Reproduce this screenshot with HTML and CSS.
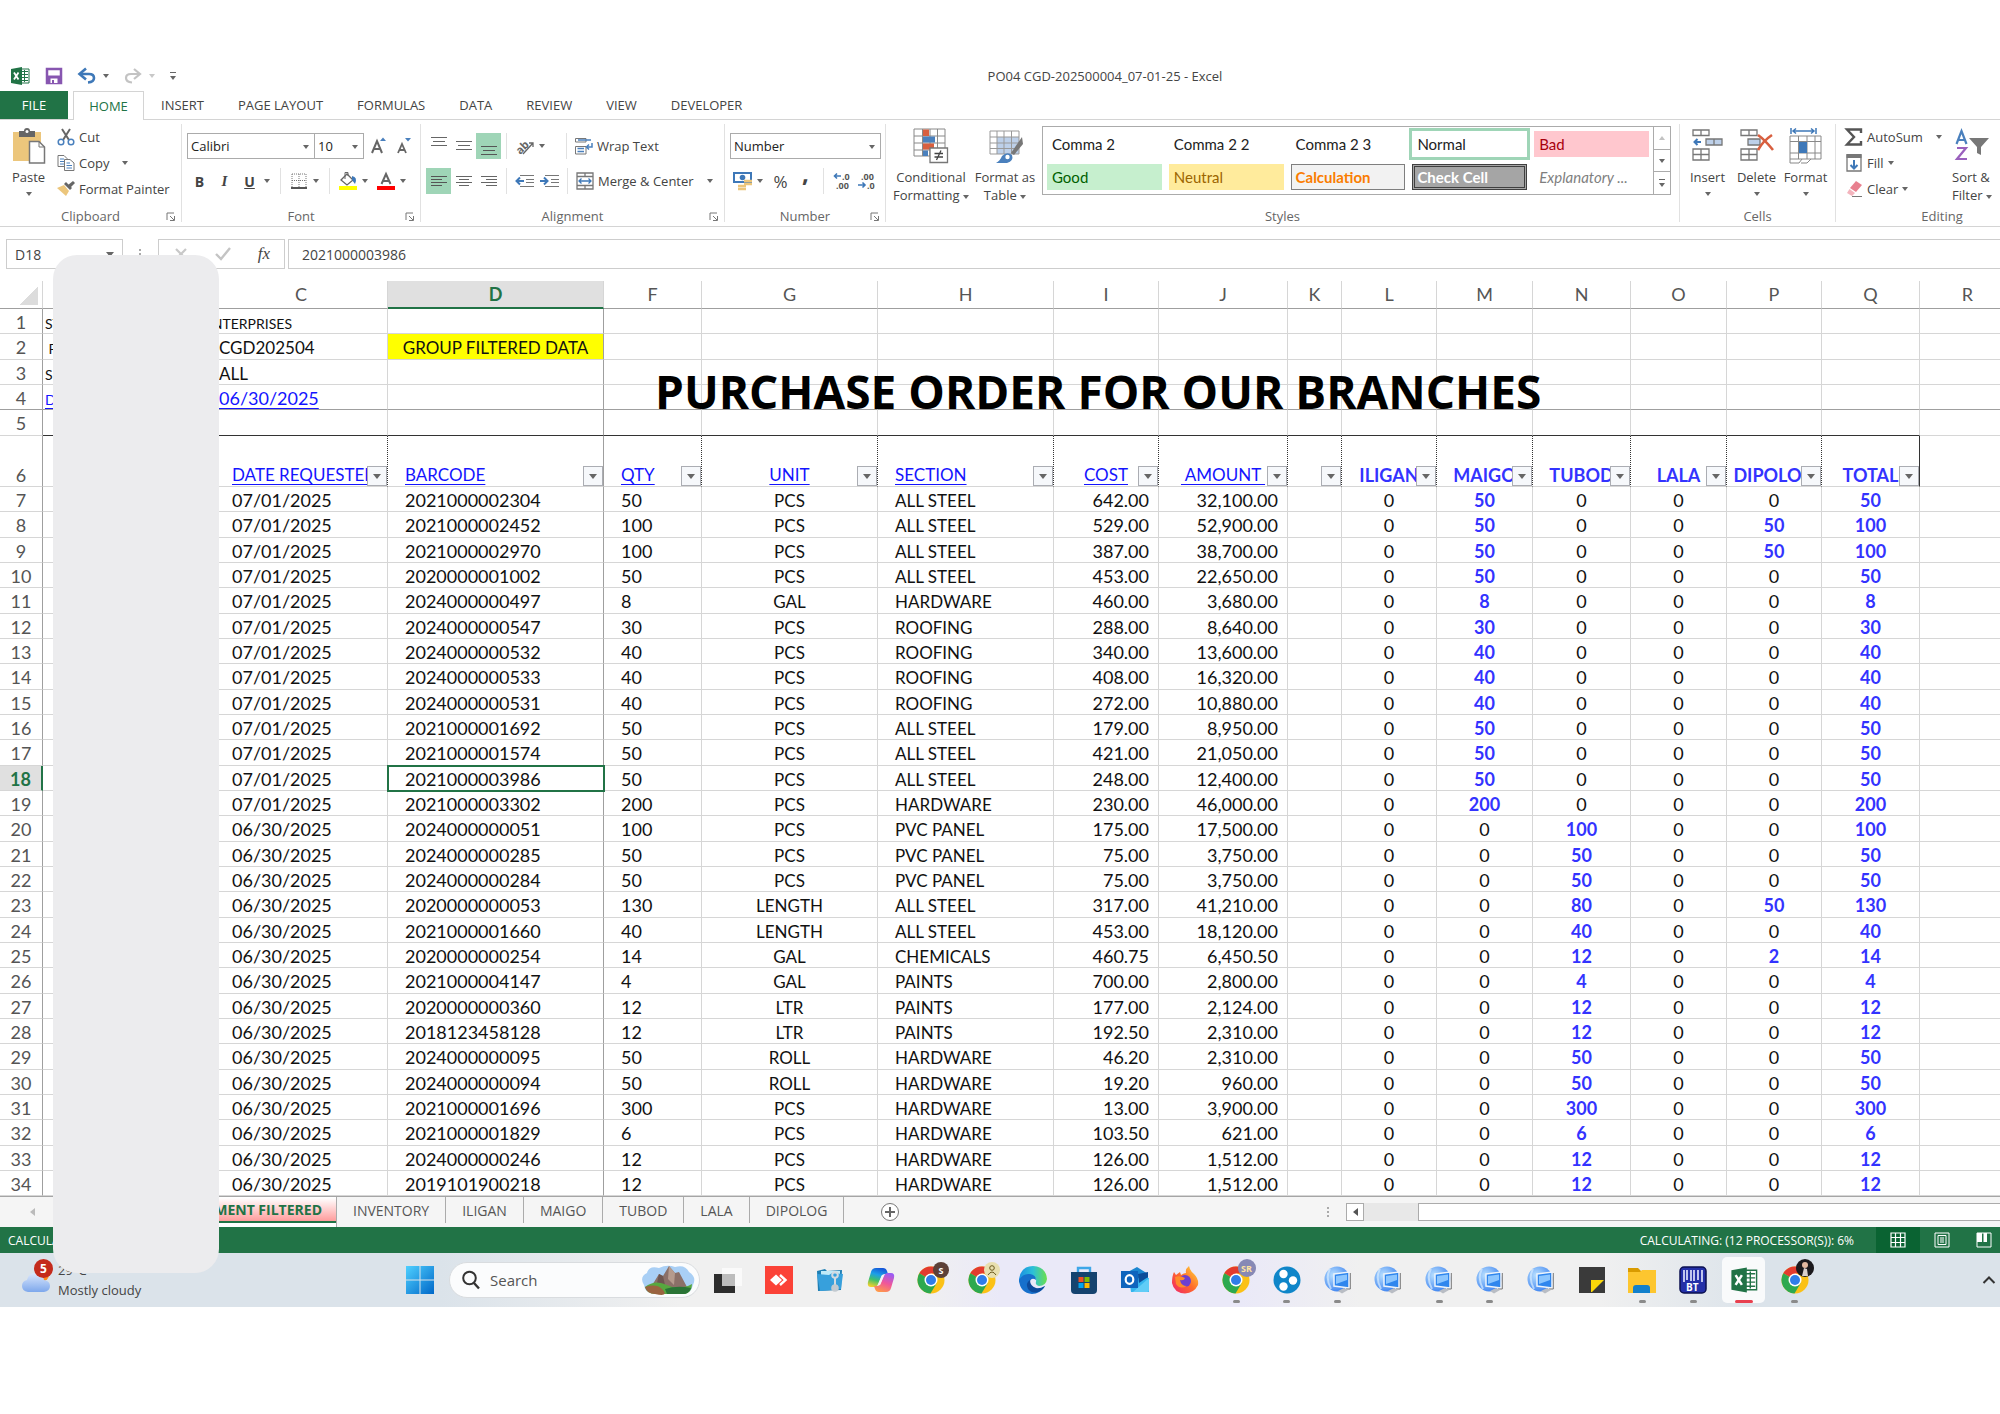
FILE: index.html
```html
<!DOCTYPE html>
<html lang="en">
<head>
  <meta charset="UTF-8" />
  <meta name="viewport" content="width=device-width, initial-scale=1.0"/>
  <title>PO04 CGD-202500004_07-01-25 - Excel</title>
  <link rel="stylesheet" href="styles.css">
</head>
<body>
  <!-- shared icons -->
  <svg class="defs" aria-hidden="true">
    <linearGradient id="gBlue" x1="0" y1="0" x2="1" y2="1"><stop offset="0" stop-color="#4fd0ff"/><stop offset="1" stop-color="#0067c8"/></linearGradient>
    <linearGradient id="gCloud" x1="0" y1="0" x2="0" y2="1"><stop offset="0" stop-color="#dbe8fd"/><stop offset="1" stop-color="#7ea8ec"/></linearGradient>
    <linearGradient id="gEdge" x1="0" y1="0" x2="1" y2="0"><stop offset="0" stop-color="#1b8fe2"/><stop offset=".5" stop-color="#2cc0d8"/><stop offset="1" stop-color="#6be04c"/></linearGradient>
    <linearGradient id="gFire" x1="0" y1="1" x2="1" y2="0"><stop offset="0" stop-color="#f0206e"/><stop offset=".5" stop-color="#ff6a2a"/><stop offset="1" stop-color="#ffe03b"/></linearGradient>
    <linearGradient id="gCopA" x1=".6" y1="0" x2=".3" y2="1"><stop offset="0" stop-color="#1557d8"/><stop offset=".35" stop-color="#1c9fe8"/><stop offset=".65" stop-color="#3fc06a"/><stop offset="1" stop-color="#f0d02c"/></linearGradient>
    <linearGradient id="gCopB" x1=".7" y1="0" x2=".3" y2="1"><stop offset="0" stop-color="#9a5cf4"/><stop offset=".5" stop-color="#f0569a"/><stop offset="1" stop-color="#ff9a4a"/></linearGradient>
    <radialGradient id="gOrb" cx=".35" cy=".35" r=".7"><stop offset="0" stop-color="#b9e0ff"/><stop offset="1" stop-color="#3d83f0"/></radialGradient>
    <symbol id="launcher" viewBox="0 0 10 10"><path d="M1 8V1H8M4 4L8 8M8.500 4V8.500H4" fill="none" stroke="#777"/></symbol>
    <symbol id="excel" viewBox="0 0 20 20">
      <path d="M10 3H19V17H10Z" fill="#fff" stroke="#217346"/>
      <path d="M11 5.500H18M11 8.500H18M11 11.500H18M11 14.500H18M14.500 4V16" stroke="#217346"/>
      <path d="M1 3L12 1V19L1 17Z" fill="#217346"/>
      <path d="M4 6.500L8.500 13.500M8.500 6.500L4 13.500" stroke="#fff" stroke-width="1.800"/>
    </symbol>
    <symbol id="chrome" viewBox="0 0 28 28">
      <circle cx="14" cy="14" r="13.500" fill="#fbc116"/>
      <path d="M14 14L2.300 7.200A13.500 13.500 0 0 1 25.700 7.200L14 7.500Z" fill="#e33b2e"/>
      <path d="M2.300 7.200A13.500 13.500 0 0 0 13.500 27.500L19.500 17.500L14 14Z" fill="#2da94f"/>
      <circle cx="14" cy="14" r="6.500" fill="#fff"/><circle cx="14" cy="14" r="5" fill="#2f7de9"/>
    </symbol>
    <symbol id="remote" viewBox="0 0 28 28">
      <circle cx="13" cy="13" r="12.500" fill="url(#gOrb)"/>
      <path d="M6 3Q1 12 7 23" stroke="#d5ebff" stroke-width="2" fill="none" opacity=".7"/>
      <path d="M10 8L25 6V22L10 20Z" fill="#2f86ee" stroke="#eef4fb" stroke-width="1.500"/>
      <path d="M12 10L23 8.500V14L12 18Z" fill="#8cc6ff"/>
      <path d="M26.300 7V23L22 23" stroke="#777" fill="none"/><path d="M14 25L20 22L24 24L18 27.500Z" fill="#b9bdc4"/>
    </symbol>
  </svg>

  <div class="app">
    <header class="titlebar">
      <div class="quick">
        <svg width="20" height="20"><use href="#excel"/></svg>
        <button aria-label="Save"><svg width="18" height="18" viewBox="0 0 18 18"><path d="M2 2H16V16H2Z" fill="#fff" stroke="#8756b0" stroke-width="2.500"/><path d="M2 8.500H16V16H2Z" fill="#8756b0"/><path d="M5.500 11.500H12.500V16H5.500Z" fill="#fff"/><path d="M7 13H9V16H7Z" fill="#8756b0"/></svg></button>
        <button class="split" aria-label="Undo"><svg width="18" height="16" viewBox="0 0 18 16"><path d="M2 6H11Q16 6 16 10T10 14.500" fill="none" stroke="#3e78b8" stroke-width="2.600"/><path d="M8 .5L1.500 6L8 11.500" fill="none" stroke="#3e78b8" stroke-width="2.600"/></svg><i class="caret"></i></button>
        <button class="split dim" aria-label="Redo"><svg width="18" height="16" viewBox="0 0 18 16"><path d="M16 6H7Q2 6 2 10T8 14.500" fill="none" stroke="#b5b5b5" stroke-width="2.200"/><path d="M10 1L16 6L10 11" fill="none" stroke="#b5b5b5" stroke-width="2.200"/></svg><i class="caret"></i></button>
        <button class="more" aria-label="Customize"><i class="caret"></i></button>
      </div>
      <div class="doc-title">PO04 CGD-202500004_07-01-25 - Excel</div>
    </header>

    <nav class="tabs">
      <button class="tab file">FILE</button>
      <button class="tab active">HOME</button>
      <button class="tab">INSERT</button>
      <button class="tab">PAGE LAYOUT</button>
      <button class="tab">FORMULAS</button>
      <button class="tab">DATA</button>
      <button class="tab">REVIEW</button>
      <button class="tab">VIEW</button>
      <button class="tab">DEVELOPER</button>
    </nav>

    <div class="ribbon">
      <section class="group clipboard">
        <div class="group-body">
          <button class="big">
            <svg width="34" height="36" viewBox="0 0 34 36"><path d="M1 4H29V33H1Z" fill="#ecc67c"/><path d="M7 3H12Q12 0 15 0T18 3H23V9H7Z" fill="#666"/><circle cx="15" cy="3.500" r="1.500" fill="#fff"/><path d="M17.500 13.500H27L32.500 19V35H17.500Z" fill="#fff" stroke="#777" stroke-width="1.500"/><path d="M27 13.500V19H32.500" fill="none" stroke="#777"/></svg>
            <span>Paste</span><i class="caret"></i>
          </button>
          <div class="stack">
            <button class="cmd"><svg width="18" height="18" viewBox="0 0 18 18"><path d="M5 1L12 12M13 1L6 12" stroke="#666" stroke-width="2"/><circle cx="4" cy="14" r="2.800" fill="none" stroke="#4a80bd" stroke-width="1.500"/><circle cx="14" cy="14" r="2.800" fill="none" stroke="#4a80bd" stroke-width="1.500"/></svg>Cut</button>
            <button class="cmd"><svg width="18" height="18" viewBox="0 0 18 18"><path d="M1 1.500H7L10 4.500V12.500H1Z" fill="#fff" stroke="#777"/><path d="M3 5H7M3 7.500H8M3 10H8" stroke="#4a80bd"/><path d="M7.500 5.500H13L17 9V16.500H7.500Z" fill="#fff" stroke="#777"/><path d="M9.500 9H13M9.500 11.500H15M9.500 14H15" stroke="#4a80bd"/></svg>Copy<i class="caret wide"></i></button>
            <button class="cmd"><svg width="18" height="18" viewBox="0 0 18 18"><path d="M0 8L7 5L12 11L9 16Z" fill="#ecc67c"/><path d="M7 4L13 10L15 8L9 2Z" fill="#666"/><path d="M11 5L16 1L18 3L13 8Z" fill="#666"/></svg>Format Painter</button>
          </div>
        </div>
        <h2>Clipboard</h2><button class="launch" aria-label="Clipboard settings"><svg width="10" height="10"><use href="#launcher"/></svg></button>
      </section>

      <section class="group font">
        <div class="group-body rows">
          <div class="row">
            <span class="combo typeface"><select aria-label="Font"><option>Calibri</option></select></span><span class="combo size"><select aria-label="Font size"><option>10</option></select></span>
            <button class="ico" aria-label="Grow font"><svg width="20" height="20" viewBox="0 0 20 20"><path d="M3 17L8 5L13 17M5 13H11" fill="none" stroke="#666" stroke-width="2"/><path d="M11 5H17L14 1.500Z" fill="#4a80bd"/></svg></button>
            <button class="ico" aria-label="Shrink font"><svg width="20" height="20" viewBox="0 0 20 20"><path d="M4 17L8 8L12 17M5.500 14H10.500" fill="none" stroke="#666" stroke-width="1.800"/><path d="M11 2H17L14 5.500Z" fill="#4a80bd"/></svg></button>
          </div>
          <div class="row">
            <button class="ico bold">B</button><button class="ico italic">I</button><button class="ico under">U</button><i class="caret"></i>
            <i class="sep"></i>
            <button class="ico" aria-label="Borders"><svg width="16" height="16" viewBox="0 0 16 16"><path d="M1 1H15M1 1V14M15 1V14M8 1V14M1 7.500H15" stroke="#777" stroke-dasharray="1 1"/><path d="M0 15H16" stroke="#555" stroke-width="2"/></svg></button><i class="caret"></i>
            <i class="sep"></i>
            <button class="ico" aria-label="Fill colour"><svg width="20" height="20" viewBox="0 0 20 20"><path d="M3 9L9 3L15 9L9 14Z" fill="#fff" stroke="#666" stroke-width="1.300"/><path d="M7 8V1.500H10V5" fill="none" stroke="#666"/><path d="M14 5Q20 6 17 13L14 9Z" fill="#3e78b8"/><path d="M1 15H19V19H1Z" fill="#ff0"/></svg></button><i class="caret"></i>
            <button class="ico" aria-label="Font colour"><svg width="20" height="20" viewBox="0 0 20 20"><path d="M5.500 13L10 3L14.500 13M7 10H13" fill="none" stroke="#666" stroke-width="2"/><path d="M1 15H19V19H1Z" fill="#f00"/></svg></button><i class="caret"></i>
          </div>
        </div>
        <h2>Font</h2><button class="launch" aria-label="Font settings"><svg width="10" height="10"><use href="#launcher"/></svg></button>
      </section>

      <section class="group align">
        <div class="group-body rows">
          <div class="row">
            <button class="ico" aria-label="Top align"><svg width="18" height="20" viewBox="0 0 18 20"><path d="M1 1.500H17M3 5.500H15M1 9.500H17" stroke="#666"/></svg></button>
            <button class="ico" aria-label="Middle align"><svg width="18" height="20" viewBox="0 0 18 20"><path d="M1 5.500H17M3 9.500H15M1 13.500H17" stroke="#666"/></svg></button>
            <button class="ico on" aria-label="Bottom align"><svg width="18" height="20" viewBox="0 0 18 20"><path d="M1 10.500H17M3 14.500H15M1 18.500H17" stroke="#555"/></svg></button>
            <i class="sep"></i>
            <button class="ico" aria-label="Orientation"><svg width="20" height="20" viewBox="0 0 20 20"><text x="1" y="15" class="ab" transform="rotate(-45 8 12)">ab</text><path d="M8 18L18 7M14 7H18V11" fill="none" stroke="#666" stroke-width="1.300"/></svg></button><i class="caret"></i>
            <i class="sep end"></i>
            <button class="cmd"><svg width="18" height="18" viewBox="0 0 18 18"><path d="M.5 1.500H11V5H.5ZM.5 9.500H11V17H.5Z" fill="#fff" stroke="#777"/><path d="M3 3H16M2.500 11.500H9M2.500 14.500H9" stroke="#4a80bd" stroke-width="1.300"/><path d="M17 6V10H12M14 7.500L11.500 10L14 12.500" fill="none" stroke="#4a80bd" stroke-width="1.500"/></svg>Wrap Text</button>
          </div>
          <div class="row">
            <button class="ico on" aria-label="Align left"><svg width="18" height="20" viewBox="0 0 18 20"><path d="M1 5.500H17M1 8.500H12M1 11.500H17M1 14.500H12" stroke="#555"/></svg></button>
            <button class="ico" aria-label="Center"><svg width="18" height="20" viewBox="0 0 18 20"><path d="M1 5.500H17M4 8.500H14M1 11.500H17M4 14.500H14" stroke="#666"/></svg></button>
            <button class="ico" aria-label="Align right"><svg width="18" height="20" viewBox="0 0 18 20"><path d="M1 5.500H17M6 8.500H17M1 11.500H17M6 14.500H17" stroke="#666"/></svg></button>
            <i class="sep"></i>
            <button class="ico" aria-label="Decrease indent"><svg width="20" height="20" viewBox="0 0 20 20"><path d="M5 4.500H19M11 8.500H19M11 11.500H19M5 15.500H19" stroke="#777"/><path d="M9 10H2M5 6.500L1.500 10L5 13.500" fill="none" stroke="#3e78b8" stroke-width="2"/></svg></button>
            <button class="ico" aria-label="Increase indent"><svg width="20" height="20" viewBox="0 0 20 20"><path d="M5 4.500H19M11 8.500H19M11 11.500H19M5 15.500H19" stroke="#777"/><path d="M0 10H7M4 6.500L7.500 10L4 13.500" fill="none" stroke="#3e78b8" stroke-width="2"/></svg></button>
            <i class="sep end near"></i>
            <button class="cmd"><svg width="18" height="18" viewBox="0 0 18 18"><path d="M1 1H17V17H1ZM1 4.500H17M1 13.500H17M9 1V4.500M9 13.500V17" fill="none" stroke="#777" stroke-width="1.300"/><path d="M3 9H15M5.500 6.500L3 9L5.500 11.500M12.500 6.500L15 9L12.500 11.500" fill="none" stroke="#3e78b8" stroke-width="1.300"/></svg>Merge &amp; Center<i class="caret wide"></i></button>
          </div>
        </div>
        <h2>Alignment</h2><button class="launch" aria-label="Alignment settings"><svg width="10" height="10"><use href="#launcher"/></svg></button>
      </section>

      <section class="group number">
        <div class="group-body rows">
          <div class="row"><span class="combo format"><select aria-label="Number format"><option>Number</option></select></span></div>
          <div class="row">
            <button class="ico" aria-label="Accounting format"><svg width="20" height="20" viewBox="0 0 20 20"><path d="M1 2H18V11H1Z" fill="#fff" stroke="#3e78b8" stroke-width="2"/><circle cx="9.500" cy="6.500" r="2.800" fill="#3e78b8"/><path d="M11 10H19M11 13H19M5 15H13M5 18H13" stroke="#ecc67c" stroke-width="2.400"/></svg></button><i class="caret"></i>
            <button class="ico pct">%</button><button class="ico comma">,</button>
            <i class="sep"></i>
            <button class="ico" aria-label="Increase decimal"><svg width="20" height="20" viewBox="0 0 20 20"><text x="10" y="9" class="dec">.0</text><text x="4" y="18" class="dec">.00</text><path d="M9 5H3M5 2.500L2.500 5L5 7.500" fill="none" stroke="#3e78b8" stroke-width="1.600"/></svg></button>
            <button class="ico" aria-label="Decrease decimal"><svg width="20" height="20" viewBox="0 0 20 20"><text x="4" y="9" class="dec">.00</text><text x="10" y="18" class="dec">.0</text><path d="M1 14H8M5.500 11.500L8 14L5.500 16.500" fill="none" stroke="#3e78b8" stroke-width="1.600"/></svg></button>
          </div>
        </div>
        <h2>Number</h2><button class="launch" aria-label="Number settings"><svg width="10" height="10"><use href="#launcher"/></svg></button>
      </section>

      <section class="group styles">
        <div class="group-body">
          <button class="big cond">
            <svg width="36" height="36" viewBox="0 0 36 36"><path d="M1 1H32V28H1ZM1 8H32M1 15H32M1 22H32M9.500 1V28M17 1V28M24.500 1V28" fill="#fff" stroke="#888"/><path d="M10 1.500H16V8H10ZM10 15.500H21V21.500H10Z" fill="#d85f3f"/><path d="M10 8.500H22V14.500H10ZM10 22.500H15V28H10Z" fill="#4a80bd"/><path d="M17 20H34.500V34.500H17Z" fill="#fff" stroke="#777" stroke-width="1.300"/><path d="M21.500 25.500H30M21.500 29H30M28 22.500L23.500 32" stroke="#444" stroke-width="1.300"/></svg>
            <span>Conditional<br>Formatting <i class="caret"></i></span>
          </button>
          <button class="big table-btn">
            <svg width="36" height="36" viewBox="0 0 36 36"><path d="M3 3H32V26H3Z" fill="#fff"/><path d="M10 9H32V26H10Z" fill="#bdd0e9"/><path d="M3 3H32V26H3ZM3 9H32M3 15H32M3 20.500H32M10 3V26M17 3V26M24.500 3V26" fill="none" stroke="#999"/><path d="M35 9L24 25L27 27L36 16Z" fill="#777"/><path d="M9 35Q13 33 15 28Q20 23 25 27Q27 33 20 35Z" fill="#4a80bd"/><circle cx="20.500" cy="29" r="2.200" fill="#fff"/></svg>
            <span>Format as<br>Table <i class="caret"></i></span>
          </button>
          <div class="gallery">
            <div class="swatches">
              <button>Comma 2</button><button>Comma 2 2</button><button>Comma 2 3</button><button class="normal">Normal</button><button class="bad">Bad</button>
              <button class="good">Good</button><button class="neutral">Neutral</button><button class="calc">Calculation</button><button class="check">Check Cell</button><button class="expl">Explanatory ...</button>
            </div>
            <div class="scroller"><button class="up" aria-label="Up"><i class="caret"></i></button><button aria-label="Down"><i class="caret"></i></button><button class="more" aria-label="More"><i class="caret"></i></button></div>
          </div>
        </div>
        <h2>Styles</h2>
      </section>

      <section class="group cells">
        <div class="group-body">
          <button class="big"><svg width="34" height="36" viewBox="0 0 34 36"><path d="M2 2H18V7.500H2ZM10 2V7.500M2 21H18V32H2ZM10 21V32M2 26.500H18" fill="#fff" stroke="#777" stroke-width="1.300"/><path d="M15 11H31V17H15ZM23 11V17" fill="#bdd0e9" stroke="#777" stroke-width="1.300"/><path d="M10 14H4M6.500 11L3.500 14L6.500 17" fill="none" stroke="#3e78b8" stroke-width="2"/></svg><span>Insert</span><i class="caret"></i></button>
          <button class="big"><svg width="34" height="36" viewBox="0 0 34 36"><path d="M1 2H17V7.500H1ZM9 2V7.500M1 21H17V32H1ZM9 21V32M1 26.500H17" fill="#fff" stroke="#777" stroke-width="1.300"/><path d="M8 11H20V17H8Z" fill="#bdd0e9" stroke="#777" stroke-width="1.300"/><path d="M18 7Q25 12 33 22M32 7Q23 13 18 22" fill="none" stroke="#d85f3f" stroke-width="2.600"/></svg><span>Delete</span><i class="caret"></i></button>
          <button class="big"><svg width="34" height="36" viewBox="0 0 34 36"><path d="M2 0V6M27 0V6M4 3H25M7 .5L4 3L7 5.500M22 .5L25 3L22 5.500" fill="none" stroke="#3e78b8" stroke-width="1.500"/><path d="M1 8H32V31H1ZM1 13.500H32M1 25H32M9.500 8V31M18 8V31M26 8V31M1 31V35H10L13 31M12 35H18L22 31" fill="none" stroke="#888"/><path d="M10 14H18V25H10Z" fill="#3e78b8"/></svg><span>Format</span><i class="caret"></i></button>
        </div>
        <h2>Cells</h2>
      </section>

      <section class="group editing">
        <div class="group-body">
          <div class="stack">
            <button class="cmd"><svg width="18" height="18" viewBox="0 0 18 18"><path d="M16 5V1.500H2L9 9L2 16.500H16V13" fill="none" stroke="#555" stroke-width="2.400"/></svg>AutoSum<i class="caret wide"></i></button>
            <button class="cmd"><svg width="18" height="18" viewBox="0 0 18 18"><path d="M2 1H16V17H2Z" fill="#fff" stroke="#777" stroke-width="1.300"/><path d="M1.500 0H16.500V4H1.500Z" fill="#777"/><path d="M9 6V14M5.500 11L9 14.500L12.500 11" fill="none" stroke="#3e78b8" stroke-width="2"/></svg>Fill<i class="caret"></i></button>
            <button class="cmd"><svg width="18" height="18" viewBox="0 0 18 18"><path d="M5 8L11 1L17 5L11 12Z" fill="#e8808f"/><path d="M4.500 9L10 13L7 16L2 13Z" fill="#f3b4bd"/><path d="M7 16.500H17" stroke="#777"/></svg>Clear<i class="caret"></i></button>
          </div>
          <button class="big sort"><svg width="34" height="36" viewBox="0 0 34 36"><path d="M1.500 16L6.500 3L11.500 16M3.500 12H9.500" fill="none" stroke="#4a80bd" stroke-width="2.200"/><path d="M2 20H11L2 31H12" fill="none" stroke="#9a60bd" stroke-width="2.200"/><path d="M14 10H34L26 19V27L22 25V19Z" fill="#777"/></svg><span>Sort &amp;<br>Filter <i class="caret"></i></span></button>
        </div>
        <h2>Editing</h2>
      </section>
    </div>

    <div class="formula-bar">
      <div class="name-box"><input type="text" value="D18" aria-label="Name box"><i class="caret"></i></div>
      <span class="dots"></span>
      <div class="fx">
        <button aria-label="Cancel"><svg width="14" height="14" viewBox="0 0 14 14"><path d="M2 2L12 12M12 2L2 12" stroke="#c8c8c8" stroke-width="2.200"/></svg></button>
        <button aria-label="Enter"><svg width="16" height="14" viewBox="0 0 16 14"><path d="M1 7L6 12L15 1" fill="none" stroke="#c4c4c4" stroke-width="2.400"/></svg></button>
        <button class="fn" aria-label="Insert function">fx</button>
      </div>
      <input class="formula" type="text" value="2021000003986" aria-label="Formula">
    </div>

    <main class="sheet">
      <table>
        <colgroup>
          <col class="w-head"><col class="w-a"><col class="w-a"><col class="w-c"><col class="w-d"><col class="w-f"><col class="w-g"><col class="w-g"><col class="w-i"><col class="w-j"><col class="w-k"><col class="w-l"><col class="w-m"><col class="w-f"><col class="w-m"><col class="w-l"><col class="w-f"><col class="w-m">
        </colgroup>
        <thead>
          <tr>
            <th class="corner"></th><th></th><th></th><th>C</th><th class="picked">D</th><th>F</th><th>G</th><th>H</th><th>I</th><th>J</th><th>K</th><th>L</th><th>M</th><th>N</th><th>O</th><th>P</th><th>Q</th><th>R</th>
          </tr>
        </thead>
        <tbody id="top">
          <tr><th>1</th><td class="label">ST</td><td class="company" colspan="2">NTERPRISES</td><td class="d"></td><td></td><td></td><td></td><td></td><td></td><td></td><td></td><td></td><td></td><td></td><td></td><td></td><td></td></tr>
          <tr><th>2</th><td class="label">&nbsp;PO</td><td></td><td class="info caps">CGD202504</td><td class="d group-name caps">GROUP FILTERED DATA</td><td></td><td></td><td></td><td></td><td></td><td></td><td></td><td></td><td></td><td></td><td></td><td></td><td></td></tr>
          <tr><th>3</th><td class="label">SE</td><td></td><td class="info caps">ALL</td><td class="d"></td><td></td><td></td><td></td><td></td><td></td><td></td><td></td><td></td><td></td><td></td><td></td><td></td><td></td></tr>
          <tr class="frozen"><th>4</th><td class="label"><a href="#">DA</a></td><td></td><td class="info"><a href="#">06/30/2025</a></td><td class="d"></td><td></td><td></td><td></td><td></td><td></td><td></td><td></td><td></td><td></td><td></td><td></td><td></td><td></td></tr>
          <tr class="ruled"><th>5</th><td></td><td></td><td></td><td class="d"></td><td></td><td></td><td></td><td></td><td></td><td></td><td></td><td></td><td></td><td></td><td></td><td></td><td class="r"></td></tr>
          <tr class="fields" id="fields"><th>6</th><td></td><td></td></tr>
        </tbody>
        <tbody id="orders"></tbody>
      </table>
      <h1 class="banner">PURCHASE ORDER FOR OUR BRANCHES</h1>
    </main>

    <div class="sheet-tabs">
      <button class="prev" aria-label="Previous sheet"><i></i></button>
      <button class="sheet-tab current"><span>MENT FILTERED</span></button>
      <button class="sheet-tab">INVENTORY</button><button class="sheet-tab">ILIGAN</button><button class="sheet-tab">MAIGO</button><button class="sheet-tab">TUBOD</button><button class="sheet-tab">LALA</button><button class="sheet-tab">DIPOLOG</button>
      <button class="add" aria-label="New sheet"><svg width="20" height="20" viewBox="0 0 20 20"><circle cx="10" cy="10" r="8.500" fill="#fff" stroke="#777"/><path d="M10 5V15M5 10H15" stroke="#666" stroke-width="2"/></svg></button>
      <div class="hscroll"><span class="dots"></span><button aria-label="Scroll left"><i></i></button><span class="track"></span><span class="thumb"></span></div>
    </div>

    <footer class="status">
      <span>CALCULATING</span>
      <span class="progress">CALCULATING: (12 PROCESSOR(S)): 6%</span>
      <button class="on" aria-label="Normal view"><svg width="16" height="16" viewBox="0 0 16 16"><path d="M1 1H15V15H1ZM1 5.500H15M1 10.500H15M5.500 1V15M10.500 1V15" fill="none" stroke="#fff" stroke-width="1.200"/></svg></button>
      <button aria-label="Page layout view"><svg width="16" height="16" viewBox="0 0 16 16"><path d="M1 1H15V15H1ZM4 3.500H12V12.500H4ZM6 6H10M6 8H10M6 10H10" fill="none" stroke="#fff"/></svg></button>
      <button aria-label="Page break view"><svg width="16" height="16" viewBox="0 0 16 16"><path d="M1 1H15V15H1Z" fill="none" stroke="#fff"/><path d="M1 1H6V10H1ZM7.500 1H11V10H7.500Z" fill="#fff"/></svg></button>
    </footer>

    <div class="taskbar">
      <div class="weather">
        <span class="cloud"><svg width="30" height="28" viewBox="0 0 30 28"><circle cx="22" cy="9" r="6" fill="#ff8a1f"/><path d="M7 26Q1 25 1 20Q1 15 6 14Q8 6 15 7Q22 7 23 14Q29 15 29 20Q29 25 23 26Z" fill="url(#gCloud)"/></svg><b>5</b></span>
        <div><p>29°C</p><p class="sky">Mostly cloudy</p></div>
      </div>
      <button class="start" aria-label="Start"><svg width="28" height="28" viewBox="0 0 28 28"><path d="M0 0H13.500V13.500H0ZM14.500 0H28V13.500H14.500ZM0 14.500H13.500V28H0ZM14.500 14.500H28V28H14.500Z" fill="url(#gBlue)"/></svg></button>
      <label class="search">
        <svg width="18" height="20" viewBox="0 0 18 20"><circle cx="7.500" cy="8" r="6.300" fill="none" stroke="#333" stroke-width="2"/><path d="M12 13L17 18.500" stroke="#333" stroke-width="2.400"/></svg>
        <input type="text" placeholder="Search" aria-label="Search">
        <svg width="54" height="30" viewBox="0 0 54 30"><path d="M3 20Q-2 12 6 8Q8 0 18 3Q26-1 34 2Q44-1 48 7Q56 12 52 20Q50 28 44 28H12Q4 28 3 20Z" fill="#a9cff5"/><path d="M10 22L18 9L22 11L28 1L34 8L38 7L46 22Z" fill="#8b7068"/><path d="M28 1L34 8L33 20L27 14Z" fill="#b59a8c"/><path d="M18 9L22 11L24 20L16 18Z" fill="#6e5650"/><path d="M4 22Q14 14 26 20T51 19Q51 27 44 29H14Q6 29 4 22Z" fill="#57a83f"/><path d="M4 22Q16 18 22 25T14 29Q6 29 4 22Z" fill="#9a6340"/><path d="M24 24Q36 20 50 23Q48 29 42 29H26Z" fill="#2a7436"/></svg>
      </label>
      <div class="apps" id="apps">
        <button aria-label="Task view"><svg width="28" height="28" viewBox="0 0 28 28"><path d="M8 2H28V20H8Z" fill="#fafafa"/><path d="M0 8H21V27H0Z" fill="#2d2d2d"/><path d="M8 8H21V20H8Z" fill="#bdbdbd"/></svg></button>
        <button aria-label="AnyDesk"><svg width="28" height="28" viewBox="0 0 28 28"><path d="M0 0H28V28H0Z" fill="#fb4237"/><path d="M5 14L11 8.500L17 14L11 19.500Z" fill="#fff"/><path d="M15 9L20.500 14L15 19" fill="none" stroke="#fff" stroke-width="2.400"/></svg></button>
        <button aria-label="Files"><svg width="28" height="28" viewBox="0 0 28 28"><path d="M1 5L9 3L11 5L26 4L25 24L2 25Z" fill="#1f7fb4"/><path d="M5 5H24V12H5Z" fill="#bfeaf8"/><path d="M1 8L13 9L16 7L27 8L25 23L4 25Z" fill="#37a0dc"/><circle cx="19" cy="9" r="2.800" fill="none" stroke="#d3dae0" stroke-width="2"/><path d="M18 11H20V20H18Z" fill="#d3dae0"/><circle cx="19" cy="22" r="3.800" fill="#c3cad0"/></svg></button>
        <button aria-label="Copilot"><svg width="28" height="28" viewBox="0 0 28 28"><path d="M9 2H16Q19 2 20 5L21 8H18Q15 8 14 11L11 18Q10 21 7 21H4Q0 21 1 16L4 6Q5 2 9 2Z" fill="url(#gCopA)"/><path d="M19 26H12Q9 26 8 23L7 20H10Q13 20 14 17L17 10Q18 7 21 7H24Q28 7 27 12L24 22Q23 26 19 26Z" fill="url(#gCopB)"/><path d="M15 9H17L13 19H11Z" fill="#f4f1f6"/></svg></button>
        <button aria-label="Chrome S"><svg width="28" height="28"><use href="#chrome"/></svg><b class="face brown">S</b></button>
        <button aria-label="Chrome guest"><svg width="28" height="28"><use href="#chrome"/></svg><b class="face cream"><svg width="12" height="12" viewBox="0 0 12 12"><circle cx="6" cy="4" r="2.300" fill="none" stroke="#6b5a1e"/><path d="M2 11Q6 5 10 11" fill="none" stroke="#6b5a1e"/></svg></b></button>
        <button aria-label="Edge"><svg width="28" height="28" viewBox="0 0 28 28"><path d="M0 13Q2 0 14 0Q27 1 28 13Q27 20 20 20Q16 19 17 16Q18 10 11 10Q4 10 0 17Z" fill="url(#gEdge)"/><path d="M0 14Q4 7 11 8Q17 9 17 14Q13 11 11 15Q10 22 17 23Q22 23 26 20Q21 28 13 28Q1 27 0 14Z" fill="#1670cc"/><path d="M11 14Q6 17 9 23Q13 28 19 26Q24 24 26 20Q21 23 17 22Q11 20 11 14Z" fill="#0d4b9c"/></svg></button>
        <button aria-label="Store"><svg width="28" height="28" viewBox="0 0 28 28"><path d="M8 7V2H20V7" fill="none" stroke="#3ea7e8" stroke-width="2.400"/><path d="M1 6H27V24Q27 28 23 28H5Q1 28 1 24Z" fill="#15436f"/><path d="M8.500 11H13.500V16H8.500Z" fill="#f25022"/><path d="M14.500 11H19.500V16H14.500Z" fill="#7fba00"/><path d="M8.500 17H13.500V22H8.500Z" fill="#00a4ef"/><path d="M14.500 17H19.500V22H14.500Z" fill="#ffb900"/></svg></button>
        <button aria-label="Outlook"><svg width="28" height="28" viewBox="0 0 28 28"><path d="M5 7L16 1L27 8V16H5Z" fill="#1b86d0"/><path d="M8 12L28 12V26H10Z" fill="#35b5ee"/><path d="M28 12L12 26H26Q28 26 28 24Z" fill="#61cdf7"/><path d="M17 8L27 6V11L18 17Z" fill="#0d4d9a"/><path d="M0 5H17V22H0Z" fill="#0f64bd"/><ellipse cx="8.500" cy="13.500" rx="3.800" ry="4.300" fill="none" stroke="#fff" stroke-width="2.200"/></svg></button>
        <button aria-label="Firefox"><svg width="28" height="28" viewBox="0 0 28 28"><path d="M3 6L5 9L9 6L10 9Q13 7 15 7Q14 3 18 0Q19 5 23 8Q28 13 27 19Q23 27 14 27.500Q3 27 1 17Q1 10 3 6Z" fill="url(#gFire)"/><circle cx="14" cy="15" r="6" fill="#6d3fd0"/><path d="M4 11Q9 9 14 12Q13 15 9 14Q10 20 16 20Q9 24 5 18Z" fill="#ff8a2a"/></svg></button>
        <button class="run" aria-label="Chrome SR"><svg width="28" height="28"><use href="#chrome"/></svg><b class="face grey">SR</b></button>
        <button class="run" aria-label="Hub"><svg width="28" height="28" viewBox="0 0 28 28"><circle cx="14" cy="14" r="13.500" fill="#0f86c9"/><circle cx="10.500" cy="8" r="4.200" fill="#fff"/><circle cx="20" cy="14.500" r="4.200" fill="#fff"/><circle cx="10.500" cy="20.500" r="4.200" fill="#fff"/></svg></button>
        <button class="run" aria-label="Remote 1"><svg width="28" height="28"><use href="#remote"/></svg></button>
        <button aria-label="Remote 2"><svg width="28" height="28"><use href="#remote"/></svg></button>
        <button class="run" aria-label="Remote 3"><svg width="28" height="28"><use href="#remote"/></svg></button>
        <button class="run" aria-label="Remote 4"><svg width="28" height="28"><use href="#remote"/></svg></button>
        <button aria-label="Remote 5"><svg width="28" height="28"><use href="#remote"/></svg></button>
        <button aria-label="Sticky notes"><svg width="28" height="28" viewBox="0 0 28 28"><path d="M1 1H27V27H1Z" fill="#3a3a3a"/><path d="M13 14H26L14 26H13Z" fill="#fbd80a"/></svg></button>
        <button class="run" aria-label="Explorer"><svg width="28" height="28" viewBox="0 0 28 28"><path d="M0 2H10L13 5V10H0Z" fill="#d99b00"/><path d="M0 6H12L14 4H28V27H0Z" fill="#fdc62f"/><path d="M5 27V22Q5 19 8 19H19Q22 19 22 22V27Z" fill="#1280cc"/></svg></button>
        <button class="run" aria-label="BarTender"><svg width="28" height="28" viewBox="0 0 28 28"><rect x="1" y="1" width="26" height="26" rx="4" fill="#2430a8" stroke="#0b1050" stroke-width="1.500"/><path d="M5 4V16M8 4V14M12 4V15M15 4V15M19 4V14M23 4V16" stroke="#e8ebff" stroke-width="1.600"/><text x="7" y="25" class="bt">BT</text></svg></button>
        <button class="run now" aria-label="Excel"><svg width="28" height="28"><use href="#excel"/></svg></button>
        <button class="run" aria-label="Chrome profile"><svg width="28" height="28"><use href="#chrome"/></svg><b class="face dark"><svg width="18" height="18" viewBox="0 0 18 18"><circle cx="9" cy="6" r="3" fill="#e3b9a0"/><path d="M6 17L8 9L11 10L12 17Z" fill="#d9d0cc"/></svg></b></button>
      </div>
      <button class="tray" aria-label="Hidden icons"><svg width="14" height="10" viewBox="0 0 14 10"><path d="M1.500 8L7 2.500L12.500 8" fill="none" stroke="#333" stroke-width="2"/></svg></button>
    </div>

    <div class="cover"></div>
  </div>

  <script src="script.js"></script>
</body>
</html>
```

FILE: styles.css
```css
* {
  box-sizing: border-box;
}

body {
  margin: 0;
  background-color: #fff;
  color: #444;
  font-family: "Open Sans", "Noto Sans", sans-serif;
  font-size: 13px;
  overflow-x: hidden;
}

button, input, select {
  font: inherit;
  color: inherit;
  background: none;
  border: none;
  padding: 0;
  margin: 0;
}

h1, h2, p {
  margin: 0;
}

svg {
  display: block;
  flex: none;
  overflow: visible;
}

.defs {
  position: absolute;
  width: 0;
  height: 0;
}

.app {
  position: relative;
  padding-top: 60px;
  overflow: hidden;
}

.caret {
  display: inline-block;
  flex: none;
  border: 3px solid transparent;
  border-top: 4px solid #666;
  border-bottom: 0;
}

/* title bar */
.titlebar {
  display: grid;
  grid-template-columns: 1fr auto 1fr;
  align-items: center;
  height: 31px;
  padding-left: 10px;
}

.quick {
  display: flex;
  align-items: center;
  gap: 15px;
}

.quick .split {
  display: flex;
  align-items: center;
  gap: 7px;
}

.dim {
  opacity: .8;
}

.dim .caret {
  border-top-color: #bbb;
}

.more {
  display: flex;
  flex-direction: column;
  align-items: center;
}

.more::before {
  content: "";
  width: 6px;
  height: 1px;
  margin-bottom: 3px;
  background: #666;
}

.doc-title {
  padding-left: 200px;
}

/* ribbon tabs */
.tabs {
  display: flex;
  height: 29px;
  border-bottom: 1px solid #d4d4d4;
}

.tab {
  padding: 0 17px;
}

.tab.file {
  width: 68px;
  margin-right: 5px;
  background: #217346;
  color: #fff;
}

.tab.active {
  width: 71px;
  padding: 0;
  height: 29px;
  color: #217346;
  background: #fff;
  border: 1px solid #d4d4d4;
  border-bottom: none;
}

/* ribbon */
.ribbon {
  display: flex;
  height: 107px;
  border-bottom: 1px solid #d4d4d4;
  overflow: hidden;
}

.group {
  flex: none;
  position: relative;
  display: flex;
  flex-direction: column;
  height: 98px;
  margin-top: 4px;
  border-right: 1px solid #e1e1e1;
}

.group h2 {
  font-size: 13px;
  font-weight: 400;
  line-height: 18px;
  text-align: center;
  color: #666;
}

.launch {
  position: absolute;
  right: 5px;
  bottom: 0;
}

.group-body {
  flex: none;
  display: flex;
  align-items: flex-start;
  height: 83px;
}

.clipboard { width: 182px; }
.font { width: 239px; }
.align { width: 304px; }
.number { width: 161px; }
.styles { width: 794px; }
.cells { width: 156px; }
.editing { width: 212px; }

.big {
  display: flex;
  flex-direction: column;
  align-items: center;
  padding-top: 4px;
  line-height: 18px;
}

.big span {
  margin-top: 4px;
  white-space: nowrap;
}

.big > .caret {
  margin-top: 6px;
}

.big .caret {
  vertical-align: middle;
}

.clipboard .big {
  width: 57px;
}

.stack {
  display: flex;
  flex-direction: column;
}

.cmd {
  display: flex;
  align-items: center;
  gap: 4px;
  height: 26px;
  white-space: nowrap;
}

.cmd .wide {
  margin-left: 9px;
}

.rows {
  flex-direction: column;
  padding: 7px 4px 0 5px;
}

.row {
  display: flex;
  align-items: center;
  height: 30px;
  margin-bottom: 5px;
}

.ico {
  display: flex;
  align-items: center;
  justify-content: center;
  width: 25px;
  height: 26px;
}

.ico.on {
  background: #9fd5b7;
}

.ico + .caret {
  margin: 0 5px 0 2px;
}

.bold { font-weight: 700; font-size: 14px; }
.italic { font: italic 700 15px "Liberation Serif", serif; }
.under { font-weight: 700; font-size: 14px; text-decoration: underline; }
.pct { font-size: 17px; }
.comma { font-weight: 700; font-size: 24px; padding-bottom: 18px; }
.dec { font: 700 9px "Open Sans", sans-serif; fill: #555; }
.ab { font: 700 11px "Open Sans", sans-serif; fill: #666; }

.sep {
  width: 1px;
  height: 26px;
  margin: 0 5px;
  background: #e1e1e1;
}

.sep.end {
  margin: 0 8px 0 16px;
}

.sep.near {
  margin-left: 5px;
}

.combo {
  position: relative;
  display: flex;
  height: 26px;
  border: 1px solid #ababab;
  color: #222;
}

.combo select {
  flex: 1;
  appearance: none;
  padding-left: 3px;
}

.combo::after {
  content: "";
  position: absolute;
  right: 5px;
  top: 11px;
  border: 3px solid transparent;
  border-top: 4px solid #666;
  border-bottom: 0;
  pointer-events: none;
}

.typeface { width: 128px; }
.size { width: 49px; border-left: none; margin-right: 2px; }
.format { width: 151px; }

.styles .big {
  width: 74px;
}

.styles .cond {
  margin-left: 8px;
}

.gallery {
  flex: 1;
  display: flex;
  height: 69px;
  margin: 2px 8px 0 0;
  border: 1px solid #ababab;
}

.swatches {
  flex: 1;
  display: grid;
  grid-template-columns: repeat(5, 1fr);
  gap: 7px;
  padding: 4px;
  color: #222;
  font: 15px Lato, sans-serif;
}

.swatches button {
  padding-left: 5px;
  text-align: left;
  height: 26px;
}

.swatches .normal {
  outline: 3px solid #9fd5b7;
}

.swatches .bad { background: #ffc7ce; color: #a8000c; }
.swatches .good { background: #c6efce; color: #006100; }
.swatches .neutral { background: #ffeb9c; color: #9c6500; }
.swatches .calc { background: #f2f2f2; color: #fa7d00; border: 1px solid #7f7f7f; font-weight: 700; padding-left: 4px; }
.swatches .check { background: #a5a5a5; color: #fff; border: 3px double #3f3f3f; font-weight: 700; padding-left: 2px; }
.swatches .expl { color: #7f7f7f; font-style: italic; }

.scroller {
  display: flex;
  flex-direction: column;
  width: 17px;
  border-left: 1px solid #ababab;
}

.scroller button {
  flex: 1;
  display: flex;
  flex-direction: column;
  align-items: center;
  justify-content: center;
}

.scroller button + button {
  border-top: 1px solid #ababab;
}

.up .caret {
  transform: rotate(180deg);
  opacity: .4;
}

.cells .group-body {
  padding-left: 3px;
}

.cells .big {
  width: 49px;
}

.editing {
  border-right: none;
}

.editing .stack {
  padding-left: 9px;
  width: 116px;
}

.editing .big span {
  text-align: left;
}

/* formula bar */
.formula-bar {
  display: flex;
  align-items: center;
  padding: 12px 0 12px 6px;
  font-size: 14px;
}

.name-box, .fx, .formula {
  height: 30px;
  border: 1px solid #cdcdcd;
}

.name-box {
  display: flex;
  align-items: center;
  width: 117px;
  padding: 0 8px;
}

.name-box input {
  flex: 1;
  min-width: 0;
}

.name-box .caret {
  border-width: 5px 4px 0;
}

.dots {
  width: 2px;
  height: 10px;
  margin: 0 17px 0 16px;
  background: repeating-linear-gradient(#aaa 0 2px, transparent 2px 4px);
}

.fx {
  display: flex;
  align-items: center;
  justify-content: space-between;
  width: 127px;
  padding: 0 14px 0 15px;
}

.fn {
  font: italic 17px "Liberation Serif", serif;
}

.formula {
  flex: 1;
  margin-left: 3px;
  padding-left: 13px;
  border-right: none;
}

/* sheet */
.sheet {
  position: relative;
  overflow: hidden;
}

table {
  width: 100%;
  table-layout: fixed;
  border-collapse: separate;
  border-spacing: 0;
  color: #111;
  font: 18px Lato, sans-serif;
}

.w-head { width: 43px; }
.w-a { width: 86px; }
.w-c { width: 173px; }
.w-d { width: 216px; }
.w-f { width: 98px; }
.w-g { width: 176px; }
.w-i { width: 105px; }
.w-j { width: 129px; }
.w-k { width: 54px; }
.w-l { width: 95px; }
.w-m { width: 96px; }

th, td {
  height: 25px;
  padding: 3px 0 0;
  line-height: 20px;
  border-right: 1px solid #d6d6d6;
  border-bottom: 1px solid #d6d6d6;
  vertical-align: baseline;
  white-space: nowrap;
  overflow: hidden;
}

th {
  font-weight: 400;
  color: #555;
}

thead th {
  height: 28px;
  border-bottom-color: #9f9f9f;
}

thead .picked {
  background: #e0e0e0;
  color: #217346;
  font-weight: 700;
  border-bottom: 2px solid #217346;
}

.corner {
  background: linear-gradient(135deg, transparent 50%, #dcdcdc 50%) 20px 5px / 18px 19px no-repeat;
}

tbody th {
  border-right-color: #9f9f9f;
}

/* rows average a little over 25px */
#orders tr:nth-child(3n+2) td,
#top tr:nth-child(3n+2) td {
  height: 26px;
}

td.d {
  border-right-color: #9f9f9f;
}

.label, .company {
  font-size: 14px;
  line-height: 16px;
}

.label {
  padding-left: 2px;
}

.company {
  padding-right: 95px;
  text-align: right;
}

.info {
  padding-left: 4px;
}

.caps {
  font-size: 17px;
}

.group-name {
  background: #ff0;
  text-align: center;
}

table a {
  color: #1414ff;
  text-underline-offset: 3px;
}

.frozen th, .frozen td {
  border-bottom-color: #9f9f9f;
}

.ruled td:not(.r) {
  border-bottom-color: #333;
}

.fields th, .fields td {
  height: 51px;
  padding-bottom: 1px;
  vertical-align: bottom;
}

.fields td {
  position: relative;
  border-right: 1px dotted #333;
}

.fields td.d {
  border-right: 1px solid #9f9f9f;
}

.fields td.q {
  border-right: 1px solid #333;
}

.fields td.r {
  border-right: 1px solid #d6d6d6;
}

.fields b {
  color: #3333ff;
}

.filter {
  position: absolute;
  right: 0;
  bottom: 0;
  display: flex;
  align-items: center;
  justify-content: center;
  width: 20px;
  height: 20px;
  background: #f6f8fb;
  border: 1px solid #abadb3;
}

.filter .caret {
  border-width: 5px 4px 0;
}

.left { padding-left: 17px; }
.mid { text-align: center; }
.right { text-align: right; padding-right: 9px; }

.hot {
  color: #3333ff;
  font-weight: 700;
}

.selected th {
  background: #e0e0e0;
  color: #217346;
  font-weight: 700;
  border-right: 2px solid #217346;
}

.selected .d {
  outline: 2px solid #217346;
  outline-offset: -1px;
}

.banner {
  position: absolute;
  left: 655px;
  top: 78px;
  color: #000;
  font-size: 46px;
  font-weight: 700;
  line-height: 64px;
  white-space: nowrap;
}

/* sheet tabs */
.sheet-tabs {
  display: flex;
  height: 31px;
  border-top: 1px solid #a5a5a5;
  background: #f5f5f5;
  color: #555;
  font-size: 14px;
}

.prev {
  width: 150px;
  padding-left: 30px;
}

.prev i, .hscroll button i {
  display: block;
  width: 0;
  border: 4px solid transparent;
  border-right: 5px solid #bbb;
  border-left: 0;
}

.sheet-tab {
  padding: 0 16px;
  height: 26px;
  border-right: 1px solid #ababab;
}

.sheet-tab.current {
  width: 187px;
  height: 30px;
  padding: 0 0 3px;
  background: #fff;
  color: #217346;
  font-weight: 700;
  text-align: right;
}

.current span {
  display: block;
  height: 25px;
  line-height: 24px;
  padding-right: 14px;
  background: linear-gradient(#fff, #ff9c9c);
  border-bottom: 2px solid #217346;
}

.add {
  margin-left: 36px;
}

.hscroll {
  flex: 1;
  display: flex;
  align-items: center;
  margin-left: 411px;
}

.hscroll button {
  display: flex;
  align-items: center;
  justify-content: center;
  width: 18px;
  height: 18px;
  background: #fff;
  border: 1px solid #ababab;
}

.hscroll button i {
  border-right-color: #555;
}

.track {
  width: 54px;
  height: 18px;
  background: #e8e8e8;
}

.thumb {
  flex: 1;
  height: 18px;
  background: #fff;
  border: 1px solid #ababab;
  border-right: none;
}

/* status bar */
.status {
  display: flex;
  align-items: center;
  height: 26px;
  padding-left: 8px;
  background: #217346;
  color: #fff;
  font-size: 12px;
  overflow: hidden;
}

.progress {
  margin-left: auto;
  margin-right: 22px;
}

.status button {
  display: flex;
  align-items: center;
  justify-content: center;
  width: 44px;
  height: 26px;
}

.status button:last-child {
  width: 36px;
  padding-left: 4px;
}

.status .on {
  background: #0a6332;
}

/* taskbar */
.taskbar {
  display: flex;
  align-items: center;
  height: 54px;
  background: linear-gradient(90deg, #dbe3ea 0, #dbe3ea 22%, #f0f0f0 34%, #f0f0f0 46%, #eae9f8 50%, #eae9f8 62%, #f0f0f0 68%, #f0f0f0 80%, #dbe3ea 88%);
}

.weather {
  display: flex;
  align-items: center;
  gap: 7px;
  width: 406px;
  padding-left: 21px;
  line-height: 20px;
}

.cloud {
  position: relative;
}

.cloud b {
  position: absolute;
  left: 13px;
  top: -7px;
  width: 19px;
  height: 19px;
  border-radius: 50%;
  background: #c42b1c;
  color: #fff;
  font-size: 12px;
  line-height: 19px;
  text-align: center;
}

.search {
  display: flex;
  align-items: center;
  gap: 10px;
  width: 251px;
  height: 36px;
  margin-left: 15px;
  padding: 0 4px 0 12px;
  border: 1px solid #d9dcdf;
  border-radius: 18px;
  background: #fbfcfd;
}

.search input {
  flex: 1;
  min-width: 0;
  font-size: 15px;
}

.search input::placeholder {
  color: #555;
}

.apps {
  display: grid;
  grid-template-columns: repeat(22, 1fr);
  width: 1117px;
  margin-left: 3px;
}

.apps button {
  position: relative;
  display: flex;
  align-items: center;
  justify-content: center;
  height: 46px;
}

.run::after {
  content: "";
  position: absolute;
  bottom: 0;
  width: 7px;
  height: 3px;
  border-radius: 2px;
  background: #8a8a8a;
}

.apps .now {
  margin: 0 4px;
  border-radius: 5px;
  background: #f9fafb;
}

.now::after {
  width: 18px;
  background: #e8404f;
}

.face {
  position: absolute;
  right: 8px;
  top: 5px;
  display: flex;
  align-items: center;
  justify-content: center;
  width: 16px;
  height: 16px;
  border-radius: 50%;
  color: #fff;
  font-size: 9px;
}

.brown { background: #5d4037; }
.cream { background: #e8dfae; }
.grey { background: #8789b5; color: #ffe3a0; }
.dark { background: #1c1a1d; overflow: hidden; }

.grey, .dark {
  top: 2px;
  right: 6px;
  width: 18px;
  height: 18px;
}

.bt {
  font: 700 10px "Open Sans", sans-serif;
  fill: #fff;
}

.tray {
  margin: 0 4px 0 auto;
}

/* rounded block over columns A and B */
.cover {
  position: absolute;
  left: 53px;
  top: 255px;
  bottom: 34px;
  width: 166px;
  border-radius: 24px;
  background: #ececee;
}
```

FILE: script.js
```js
const fields = [
  ["DATE REQUESTED", "left caps"], ["BARCODE", "left d caps"], ["QTY", "left caps"], ["UNIT", "mid caps"], ["SECTION", "left caps"],
  ["COST", "mid caps"], ["\u00a0AMOUNT\u00a0", "mid caps"], ["", ""],
  ["ILIGAN", "mid"], ["MAIGO", "mid"], ["TUBOD", "mid"], ["LALA", "mid"], ["DIPOLOG", "mid"], ["TOTAL", "mid q"]
];

// date, barcode, qty, unit, section, cost, amount, iligan, maigo, tubod, lala, dipolog
const orders = [
  ["07/01/2025", "2021000002304", 50, "PCS", "ALL STEEL", "642.00", "32,100.00", 0, 50, 0, 0, 0],
  ["07/01/2025", "2021000002452", 100, "PCS", "ALL STEEL", "529.00", "52,900.00", 0, 50, 0, 0, 50],
  ["07/01/2025", "2021000002970", 100, "PCS", "ALL STEEL", "387.00", "38,700.00", 0, 50, 0, 0, 50],
  ["07/01/2025", "2020000001002", 50, "PCS", "ALL STEEL", "453.00", "22,650.00", 0, 50, 0, 0, 0],
  ["07/01/2025", "2024000000497", 8, "GAL", "HARDWARE", "460.00", "3,680.00", 0, 8, 0, 0, 0],
  ["07/01/2025", "2024000000547", 30, "PCS", "ROOFING", "288.00", "8,640.00", 0, 30, 0, 0, 0],
  ["07/01/2025", "2024000000532", 40, "PCS", "ROOFING", "340.00", "13,600.00", 0, 40, 0, 0, 0],
  ["07/01/2025", "2024000000533", 40, "PCS", "ROOFING", "408.00", "16,320.00", 0, 40, 0, 0, 0],
  ["07/01/2025", "2024000000531", 40, "PCS", "ROOFING", "272.00", "10,880.00", 0, 40, 0, 0, 0],
  ["07/01/2025", "2021000001692", 50, "PCS", "ALL STEEL", "179.00", "8,950.00", 0, 50, 0, 0, 0],
  ["07/01/2025", "2021000001574", 50, "PCS", "ALL STEEL", "421.00", "21,050.00", 0, 50, 0, 0, 0],
  ["07/01/2025", "2021000003986", 50, "PCS", "ALL STEEL", "248.00", "12,400.00", 0, 50, 0, 0, 0],
  ["07/01/2025", "2021000003302", 200, "PCS", "HARDWARE", "230.00", "46,000.00", 0, 200, 0, 0, 0],
  ["06/30/2025", "2024000000051", 100, "PCS", "PVC PANEL", "175.00", "17,500.00", 0, 0, 100, 0, 0],
  ["06/30/2025", "2024000000285", 50, "PCS", "PVC PANEL", "75.00", "3,750.00", 0, 0, 50, 0, 0],
  ["06/30/2025", "2024000000284", 50, "PCS", "PVC PANEL", "75.00", "3,750.00", 0, 0, 50, 0, 0],
  ["06/30/2025", "2020000000053", 130, "LENGTH", "ALL STEEL", "317.00", "41,210.00", 0, 0, 80, 0, 50],
  ["06/30/2025", "2021000001660", 40, "LENGTH", "ALL STEEL", "453.00", "18,120.00", 0, 0, 40, 0, 0],
  ["06/30/2025", "2020000000254", 14, "GAL", "CHEMICALS", "460.75", "6,450.50", 0, 0, 12, 0, 2],
  ["06/30/2025", "2021000004147", 4, "GAL", "PAINTS", "700.00", "2,800.00", 0, 0, 4, 0, 0],
  ["06/30/2025", "2020000000360", 12, "LTR", "PAINTS", "177.00", "2,124.00", 0, 0, 12, 0, 0],
  ["06/30/2025", "2018123458128", 12, "LTR", "PAINTS", "192.50", "2,310.00", 0, 0, 12, 0, 0],
  ["06/30/2025", "2024000000095", 50, "ROLL", "HARDWARE", "46.20", "2,310.00", 0, 0, 50, 0, 0],
  ["06/30/2025", "2024000000094", 50, "ROLL", "HARDWARE", "19.20", "960.00", 0, 0, 50, 0, 0],
  ["06/30/2025", "2021000001696", 300, "PCS", "HARDWARE", "13.00", "3,900.00", 0, 0, 300, 0, 0],
  ["06/30/2025", "2021000001829", 6, "PCS", "HARDWARE", "103.50", "621.00", 0, 0, 6, 0, 0],
  ["06/30/2025", "2024000000246", 12, "PCS", "HARDWARE", "126.00", "1,512.00", 0, 0, 12, 0, 0],
  ["06/30/2025", "2019101900218", 12, "PCS", "HARDWARE", "126.00", "1,512.00", 0, 0, 12, 0, 0]
];

const fieldRow = document.getElementById("fields");
fieldRow.innerHTML += fields.map(([name, cls], i) => {
  const text = i < 7 ? `<a href="#">${name}</a>` : `<b>${name}</b>`;
  return `<td class="${cls}">${text}<button class="filter" aria-label="Filter ${name}"><i class="caret"></i></button></td>`;
}).join("") + '<td class="r"></td>';

const cell = (value, cls) => `<td class="${cls}">${value}</td>`;
const count = (value) => cell(value, value > 0 ? "mid hot" : "mid");

document.getElementById("orders").innerHTML = orders.map((o, i) => {
  const branches = o.slice(7);
  const total = branches.reduce((a, b) => a + b, 0);
  const row = i + 7;
  return `<tr class="${row === 18 ? "selected" : ""}"><th>${row}</th><td></td><td></td>` +
    cell(o[0], "left") + cell(o[1], "left d") + cell(o[2], "left") + cell(o[3], "mid caps") + cell(o[4], "left caps") +
    cell(o[5], "right") + cell(o[6], "right") + "<td></td>" +
    branches.map(count).join("") + count(total) + "<td></td></tr>";
}).join("");
```
